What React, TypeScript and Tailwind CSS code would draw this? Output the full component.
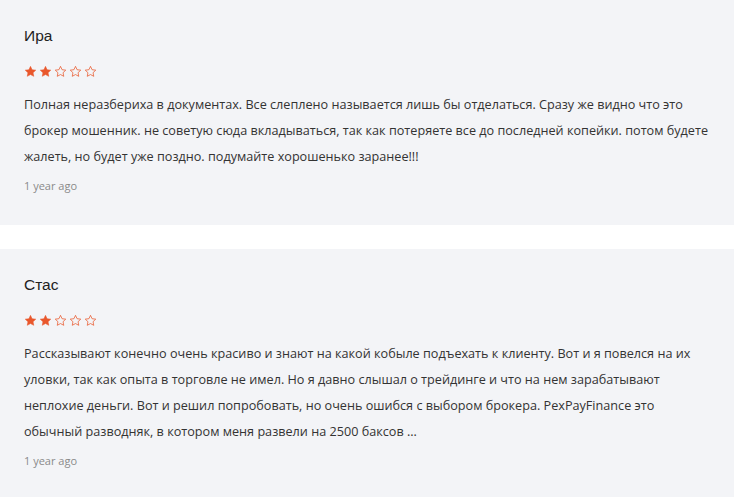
import React from "react";

const STAR = "M12 2.5l2.9 6.2 6.8.8-5 4.7 1.3 6.7L12 17.6l-6 3.3 1.3-6.7-5-4.7 6.8-.8z";

function Stars({ n }: { n: number }) {
  return (
    <div className="flex items-center gap-[2px]">
      {[0, 1, 2, 3, 4].map((i) => (
        <svg key={i} width="13" height="13" viewBox="0 0 24 24">
          <path
            d={STAR}
            fill={i < n ? "#e9572c" : "none"}
            stroke="#e9572c"
            strokeWidth={i < n ? 1 : 1.4}
            strokeLinejoin="round"
          />
        </svg>
      ))}
    </div>
  );
}

function Review({ name, text, className }: { name: string; text: string; className: string }) {
  return (
    <div className={"bg-[#f3f4f7] px-6 pt-6 " + className}>
      <div className="text-[15.5px] leading-6 text-[#222] font-['Liberation_Sans',Arial,sans-serif]">{name}</div>
      <div className="mt-[17px]">
        <Stars n={2} />
      </div>
      <p className="mt-[13px] text-[12.65px] leading-[26px] text-[#333] font-['Open_Sans',sans-serif]">{text}</p>
      <div className="mt-[7px] text-[11px] leading-5 text-[#8a8a8a] font-['Open_Sans',sans-serif]">1 year ago</div>
    </div>
  );
}

export default function App() {
  return (
    <div className="w-[734px] h-[497px] bg-white flex flex-col overflow-hidden">
      <Review
        className="h-[225px] shrink-0"
        name="Ира"
        text="Полная неразбериха в документах. Все слеплено называется лишь бы отделаться. Сразу же видно что это брокер мошенник. не советую сюда вкладываться, так как потеряете все до последней копейки. потом будете жалеть, но будет уже поздно. подумайте хорошенько заранее!!!"
      />
      <div className="h-[24px] shrink-0 bg-white" />
      <Review
        className="flex-1"
        name="Стас"
        text="Рассказывают конечно очень красиво и знают на какой кобыле подъехать к клиенту. Вот и я повелся на их уловки, так как опыта в торговле не имел. Но я давно слышал о трейдинге и что на нем зарабатывают неплохие деньги. Вот и решил попробовать, но очень ошибся с выбором брокера. PexPayFinance это обычный разводняк, в котором меня развели на 2500 баксов ..."
      />
    </div>
  );
}
